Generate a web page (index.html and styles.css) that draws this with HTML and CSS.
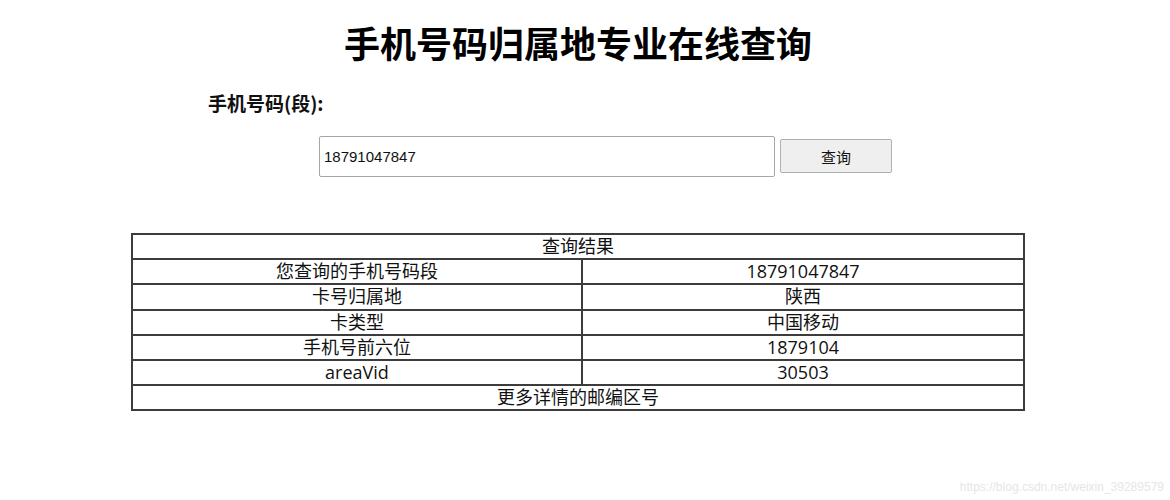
FILE: index.html
```html
<!DOCTYPE html>
<html lang="zh-CN">
<head>
<meta charset="utf-8">
<title>手机号码归属地专业在线查询</title>
<link rel="stylesheet" href="styles.css">
</head>
<body>
<div class="page">
  <h1 class="title">手机号码归属地专业在线查询</h1>
  <div class="label">手机号码(段):</div>
  <form class="search">
    <input class="phone" type="text" value="18791047847">
    <button class="btn" type="button">查询</button>
  </form>
  <table class="result">
    <tr><td colspan="2">查询结果</td></tr>
    <tr><td class="half">您查询的手机号码段</td><td>18791047847</td></tr>
    <tr><td class="half">卡号归属地</td><td>陕西</td></tr>
    <tr><td class="half">卡类型</td><td>中国移动</td></tr>
    <tr><td class="half">手机号前六位</td><td>1879104</td></tr>
    <tr><td class="half">areaVid</td><td>30503</td></tr>
    <tr><td colspan="2">更多详情的邮编区号</td></tr>
  </table>
</div>
<div class="watermark">https://blog.csdn.net/weixin_39289579</div>
</body>
</html>
```

FILE: styles.css
```css
html, body {
  margin: 0;
  padding: 0;
  background: #ffffff;
}
body {
  font-family: "Open Sans", "Noto Sans CJK SC", sans-serif;
  color: #000;
  width: 1170px;
  height: 500px;
  position: relative;
  overflow: hidden;
}
.page {
  width: 1156px;
  padding-top: 20px;
}
.title {
  margin: 0;
  text-align: center;
  font-family: "Noto Sans CJK SC", sans-serif;
  font-size: 36px;
  font-weight: 700;
  line-height: 44px;
  color: #000;
}
.label {
  margin-top: 26px;
  padding-left: 208px;
  font-family: "Noto Sans CJK SC", sans-serif;
  font-size: 19px;
  font-weight: 700;
  line-height: 26px;
  color: #111;
}
.search {
  margin: 20px 0 0 0;
  padding-left: 319px;
  display: flex;
  align-items: center;
  gap: 5px;
}
.phone {
  box-sizing: border-box;
  width: 456px;
  height: 41px;
  margin: 0;
  padding: 0 4px;
  border: 1px solid #a6a6a6;
  border-radius: 2px;
  font-family: "Liberation Sans", Arial, sans-serif;
  font-size: 15px;
  color: #111;
  background: #fff;
  outline: none;
}
.btn {
  box-sizing: border-box;
  width: 112px;
  height: 34px;
  margin: 0;
  margin-top: -1px;
  padding: 0;
  border: 1px solid #b0b0b0;
  border-radius: 2px;
  background: #efefef;
  font-family: "Liberation Sans", "Noto Sans CJK SC", sans-serif;
  font-size: 15px;
  color: #111;
}
.result {
  margin: 56px 0 0 131px;
  width: 894px;
  border-collapse: collapse;
  border: 2px solid #3c3c3c;
}
.result td {
  border: 2px solid #3c3c3c;
  padding: 0;
  text-align: center;
  font-size: 18px;
  line-height: 23.2px;
  color: #111;
}
.result td.half {
  width: 448px;
}
.watermark {
  position: absolute;
  right: 6px;
  bottom: 6px;
  font-family: "Liberation Sans", Arial, sans-serif;
  font-size: 12px;
  color: #e6e6e6;
}
```
